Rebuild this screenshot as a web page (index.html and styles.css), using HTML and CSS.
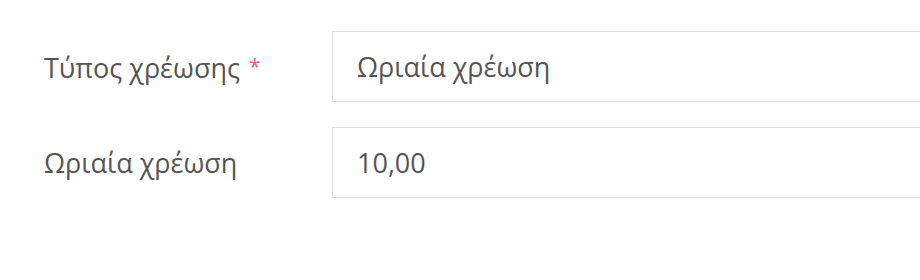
FILE: index.html
```html
<!DOCTYPE html>
<html lang="el">
<head>
<meta charset="utf-8">
<link rel="stylesheet" href="styles.css">
</head>
<body>
<form class="form">
  <div class="row">
    <label class="label">Τύπος χρέωσης <span class="req">*</span></label>
    <div class="field">Ωριαία χρέωση</div>
  </div>
  <div class="row">
    <label class="label">Ωριαία χρέωση</label>
    <div class="field">10,00</div>
  </div>
</form>
</body>
</html>
```
FILE: styles.css
```css
html, body {
  margin: 0;
  padding: 0;
  background: #fff;
}
body {
  font-family: "Open Sans", "Noto Sans", sans-serif;
  color: #555;
  overflow: hidden;
}
.form {
  display: flex;
  flex-direction: column;
  gap: 25px;
  padding: 31px 0 0 44px;
  width: 876px;
}
.row {
  display: grid;
  grid-template-columns: 288px 1fr;
  align-items: center;
  margin-right: -20px;
}
.label {
  font-size: 27px;
  line-height: 36px;
  color: #555;
}
.req {
  color: #e0607e;
  font-size: 21px;
  margin-left: 2px;
  vertical-align: 4px;
}
.field {
  box-sizing: border-box;
  height: 71px;
  border: 1px solid #ddd;
  border-right: 0;
  padding: 0 24px;
  display: flex;
  align-items: center;
  font-size: 27px;
  color: #555;
}
```
